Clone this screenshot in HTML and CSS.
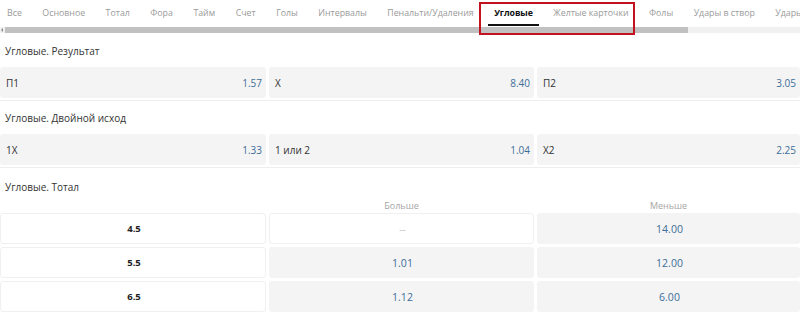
FILE: index.html
```html
<!DOCTYPE html>
<html lang="ru">
<head>
<meta charset="utf-8">
<link rel="stylesheet" href="styles.css">
</head>
<body>
<div class="top">
  <nav class="tabs">
    <span class="tab">Все</span>
    <span class="tab">Основное</span>
    <span class="tab">Тотал</span>
    <span class="tab">Фора</span>
    <span class="tab">Тайм</span>
    <span class="tab">Счет</span>
    <span class="tab">Голы</span>
    <span class="tab">Интервалы</span>
    <span class="tab">Пенальти/Удаления</span>
    <span class="tab active">Угловые</span>
    <span class="tab">Желтые карточки</span>
    <span class="tab">Фолы</span>
    <span class="tab">Удары в створ</span>
    <span class="tab">Удары</span>
  </nav>
  <div class="scrollbar">
    <span class="arrow"></span>
    <span class="thumb"></span>
  </div>
  <div class="highlight"></div>
</div>

<section class="market first">
  <div class="market-title">Угловые. Результат</div>
  <div class="grid3">
    <div class="cell"><span class="label">П1</span><span class="odd">1.57</span></div>
    <div class="cell"><span class="label">X</span><span class="odd">8.40</span></div>
    <div class="cell"><span class="label">П2</span><span class="odd">3.05</span></div>
  </div>
</section>

<section class="market">
  <div class="market-title">Угловые. Двойной исход</div>
  <div class="grid3">
    <div class="cell"><span class="label">1X</span><span class="odd">1.33</span></div>
    <div class="cell"><span class="label">1 или 2</span><span class="odd">1.04</span></div>
    <div class="cell"><span class="label">X2</span><span class="odd">2.25</span></div>
  </div>
</section>

<section class="market last">
  <div class="market-title">Угловые. Тотал</div>
  <div class="grid3 heads">
    <div></div>
    <div class="head">Больше</div>
    <div class="head">Меньше</div>
  </div>
  <div class="grid3 rows">
    <div class="cell white center"><b class="line">4.5</b></div>
    <div class="cell white center"><span class="empty">--</span></div>
    <div class="cell center"><span class="odd big">14.00</span></div>

    <div class="cell white center"><b class="line">5.5</b></div>
    <div class="cell center"><span class="odd big">1.01</span></div>
    <div class="cell center"><span class="odd big">12.00</span></div>

    <div class="cell white center"><b class="line">6.5</b></div>
    <div class="cell center"><span class="odd big">1.12</span></div>
    <div class="cell center"><span class="odd big">6.00</span></div>
  </div>
</section>
</body>
</html>
```

FILE: styles.css
```css
* { box-sizing: border-box; }

body {
  margin: 0;
  font-family: "Open Sans", "Liberation Sans", sans-serif;
  font-size: 10px;
  color: #333;
  background: #fff;
  overflow: hidden;
}

.top {
  position: relative;
}

.tabs {
  display: flex;
  gap: 8.5px;
  height: 27px;
  padding-left: 1px;
  white-space: nowrap;
  overflow: hidden;
}

.tab {
  flex: none;
  padding: 0 6px;
  line-height: 27px;
  font-size: 8.8px;
  color: #9a9a9a;
  position: relative;
}

.tab.active {
  color: #111;
  font-weight: 700;
  letter-spacing: -0.1px;
}

.tab.active::after {
  content: "";
  position: absolute;
  left: 0;
  right: 0;
  bottom: 1px;
  height: 2px;
  background: #111;
}

.scrollbar {
  display: flex;
  align-items: center;
  height: 6px;
  background: #f1f1f1;
}

.arrow {
  width: 5px;
  height: 6px;
  position: relative;
}

.arrow::before {
  content: "";
  position: absolute;
  left: 1px;
  top: 1px;
  border-style: solid;
  border-width: 2px 2px 2px 0;
  border-color: transparent #8a8a8a transparent transparent;
}

.thumb {
  width: 683px;
  height: 6px;
  background: #c1c1c1;
}

.highlight {
  position: absolute;
  left: 479px;
  top: 2px;
  width: 156px;
  height: 33px;
  border: 2px solid #c3121f;
}

.market {
  border-bottom: 1px solid #eeeeee;
  padding-bottom: 2px;
}

.market.first {
  padding-top: 1px;
}

.market.last {
  border-bottom: 0;
  padding-top: 2px;
}

.market-title {
  height: 33px;
  line-height: 34px;
  padding-left: 5px;
  font-size: 10px;
  color: #333;
}

.grid3 {
  display: grid;
  grid-template-columns: 266px 265px 263px;
  column-gap: 3px;
}

.rows {
  row-gap: 3px;
}

.heads {
  height: 13px;
  margin-top: -3px;
}

.head {
  text-align: center;
  font-size: 9px;
  color: #a5a5a5;
  line-height: 12px;
}

.cell {
  display: flex;
  justify-content: space-between;
  align-items: center;
  height: 31px;
  padding: 0 4px 0 6px;
  background: #f4f4f4;
  border-radius: 3px;
}

.cell.center {
  justify-content: center;
}

.cell.white {
  background: #fff;
  border: 1px solid #f0f0f0;
}

.label {
  color: #333;
  font-size: 10px;
}

.odd {
  color: #3d6e98;
  font-size: 10px;
}

.odd.big {
  font-size: 10.5px;
}

.line {
  font-size: 9.5px;
  font-weight: 700;
  color: #222;
}

.empty {
  color: #c0c0c0;
}
```
